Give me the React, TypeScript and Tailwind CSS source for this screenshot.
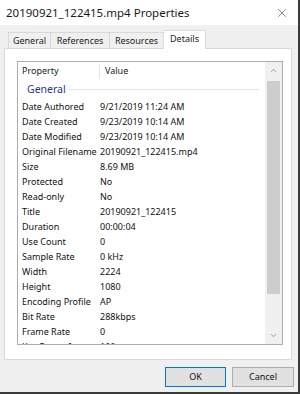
import { X, ChevronUp, ChevronDown } from "lucide-react";

const rows: [string, string][] = [
  ["Date Authored", "9/21/2019 11:24 AM"],
  ["Date Created", "9/23/2019 10:14 AM"],
  ["Date Modified", "9/23/2019 10:14 AM"],
  ["Original Filename", "20190921_122415.mp4"],
  ["Size", "8.69 MB"],
  ["Protected", "No"],
  ["Read-only", "No"],
  ["Title", "20190921_122415"],
  ["Duration", "00:00:04"],
  ["Use Count", "0"],
  ["Sample Rate", "0 kHz"],
  ["Width", "2224"],
  ["Height", "1080"],
  ["Encoding Profile", "AP"],
  ["Bit Rate", "288kbps"],
  ["Frame Rate", "0"],
  ["Key Frame Inter", "100"],
];

export default function App() {
  return (
    <div
      className="w-[300px] h-[394px] bg-[#f0f0f0] flex flex-col border-r-2 border-b-2 border-[#3a3a3a] overflow-hidden text-black"
      style={{ fontFamily: '"Noto Sans", "Open Sans", sans-serif' }}
    >
      {/* Title bar */}
      <div className="h-[25px] bg-white flex items-center justify-between pl-[6px] pr-[9px] shrink-0">
        <span className="text-[11.5px] text-[#1a1a1a]">20190921_122415.mp4 Properties</span>
        <X size={14} strokeWidth={1} className="text-[#333]" />
      </div>

      {/* Tabs */}
      <div className="flex items-end pl-[8px] h-[24px] shrink-0 -mb-px relative z-10">
        <div className="w-[43px] h-[17px] border border-b-0 border-[#d9d9d9] flex items-center justify-center text-[9px] text-[#222]">
          General
        </div>
        <div className="w-[59px] h-[17px] border border-b-0 border-l-0 border-[#d9d9d9] flex items-center justify-center text-[9px] text-[#222]">
          References
        </div>
        <div className="w-[54px] h-[17px] border border-b-0 border-l-0 border-[#d9d9d9] flex items-center justify-center text-[9px] text-[#222]">
          Resources
        </div>
        <div className="w-[42px] h-[19px] pb-[2px] border border-b-0 border-l-0 border-[#d9d9d9] bg-white flex items-center justify-center text-[9px] text-[#222]">
          Details
        </div>
      </div>

      {/* Panel */}
      <div className="ml-[4px] mr-[6px] h-[312px] shrink-0 bg-white border border-[#d9d9d9] pt-[12px] pl-[12px] pr-[8px] pb-[14px] flex">
        <div className="flex-1 border border-[#adadad] flex overflow-hidden">
          <div className="flex-1 flex flex-col overflow-hidden">
            {/* Header */}
            <div className="h-[18px] flex items-center text-[9px] text-[#222] shrink-0">
              <div className="w-[82px] pl-[4px] border-r border-[#e5e5e5] h-[15px] flex items-center">Property</div>
              <div className="pl-[5px]">Value</div>
            </div>
            {/* Group */}
            <div className="h-[19px] flex items-center pl-[9px] shrink-0">
              <span className="text-[10.5px] text-[#1e3c8c]">General</span>
              <div className="flex-1 h-px bg-[#dde5ef] ml-[3px] mr-[6px]" />
            </div>
            {rows.map(([k, v]) => (
              <div key={k} className="h-[15px] flex items-center text-[9px] text-[#111] shrink-0">
                <div className="w-[82px] pl-[4px] whitespace-nowrap overflow-hidden">{k}</div>
                <div className="whitespace-nowrap">{v}</div>
              </div>
            ))}
          </div>
          {/* Scrollbar */}
          <div className="w-[17px] bg-[#f0f0f0] flex flex-col items-center shrink-0">
            <div className="h-[17px] flex items-center justify-center">
              <ChevronUp size={9} strokeWidth={1.5} className="text-[#606060]" />
            </div>
            <div className="w-[13px] h-[213px] bg-[#cdcdcd] mt-[2px]" />
            <div className="flex-1" />
            <div className="h-[17px] flex items-center justify-center">
              <ChevronDown size={9} strokeWidth={1.5} className="text-[#606060]" />
            </div>
          </div>
        </div>
      </div>

      {/* Buttons */}
      <div className="flex justify-end gap-[6px] pr-[4px] pt-[7px]">
        <button className="w-[61px] h-[20px] bg-[#e1e1e1] border border-[#0078d7] text-[9px] text-[#111] flex items-center justify-center">
          OK
        </button>
        <button className="w-[62px] h-[20px] bg-[#e1e1e1] border border-[#adadad] text-[9px] text-[#111] flex items-center justify-center">
          Cancel
        </button>
      </div>
    </div>
  );
}
